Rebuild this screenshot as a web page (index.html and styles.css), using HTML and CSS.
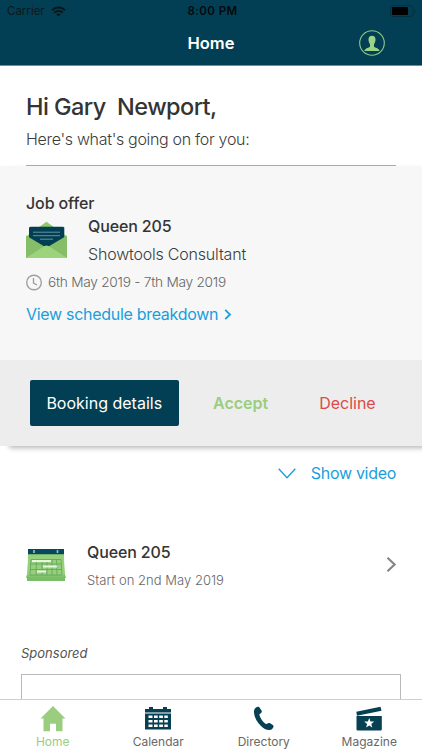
FILE: index.html
```html
<!DOCTYPE html>
<html lang="en">
<head>
<meta charset="utf-8">
<title>Home</title>
<link rel="stylesheet" href="styles.css">
</head>
<body>
<div class="app">
  <header class="header">
    <div class="status">
      <div class="carrier"><span>Carrier</span>
        <svg width="15" height="11" viewBox="0 0 15 11"><g fill="none" stroke="#0b1519" stroke-width="2"><path d="M1 4.200C4.700.6 10.300.6 14 4.200"/><path d="M3.300 6.600c2.400-2.300 6-2.300 8.400 0"/></g><path d="M7.500 10.500 5.200 8.300c1.300-1.200 3.300-1.200 4.600 0z" fill="#0b1519"/></svg>
      </div>
      <span class="time">8:00 PM</span>
      <svg class="battery" width="26" height="12" viewBox="0 0 26 12"><rect x=".5" y=".5" width="22.500" height="11" rx="2.500" fill="none" stroke="#02303f"/><rect x="2" y="2" width="16" height="8" rx="1" fill="#000"/><path d="M24.300 4c1.400.6 1.400 3.400 0 4z" fill="#02303f"/></svg>
    </div>
    <div class="navbar">
      <h1 class="nav-title">Home</h1>
      <svg class="avatar" width="26" height="26" viewBox="0 0 26 26"><circle cx="13" cy="13" r="12.300" fill="none" stroke="#8fcb83" stroke-width="1.100"/><path d="M13 5.700c2.300 0 3.600 1.500 3.500 3.800 0 2.300-.8 3.500-1.500 4.700v2.200c.3 1.400 5.200 1.300 5.500 4.600H5.500c.3-3.300 5.200-3.200 5.500-4.600v-2.200c-.7-1.200-1.500-2.400-1.500-4.700-.1-2.300 1.200-3.800 3.500-3.800z" fill="#9bd486"/></svg>
    </div>
  </header>

  <main class="content">
    <section class="greeting">
      <h2 class="hello"><span>Hi Gary  Newport,</span></h2>
      <p class="intro">Here's what's going on for you:</p>
    </section>

    <section class="offer">
      <div class="offer-body">
        <h3 class="offer-title">Job offer</h3>
        <div class="offer-main">
          <svg class="envelope" width="42" height="38" viewBox="0 0 42 38"><path d="M0 15.500 20.500.8 41 15.500V37H0z" fill="#8fc76d"/><path d="M3 6.500 4.500 5.700H37l1.300.8V18L20.500 28 3 18z" fill="#023f52"/><path d="M0 14.500 18.500 25.500 0 37z" fill="#86bd69"/><path d="M41 14.500 22.500 25.500 41 37z" fill="#86bd69"/><path d="M0 37 18.500 25q2-1.200 4 0L41 37z" fill="#9dd47b"/><path d="M7 11.200h27M7 14.700h27M14 18.200h13" stroke="#719baa" stroke-width=".9"/></svg>
          <div>
            <h4 class="job">Queen 205</h4>
            <p class="role">Showtools Consultant</p>
          </div>
        </div>
        <div class="dates">
          <svg width="17" height="17" viewBox="0 0 17 17" fill="none" stroke="#a0a0a0" stroke-width="1.400"><circle cx="8" cy="8.500" r="7.300"/><path d="M7.500 4v5l3.600 2"/></svg>
          <span>6th May 2019 - 7th May 2019</span>
        </div>
        <a class="breakdown"><span>View schedule breakdown</span>
          <svg width="8" height="11" viewBox="0 0 8 11"><path d="M1.200.8 6 5.500 1.200 10.200" fill="none" stroke="#1a9edb" stroke-width="1.800"/></svg>
        </a>
      </div>
      <div class="actions">
        <button class="btn-details">Booking details</button>
        <span class="accept">Accept</span>
        <span class="decline">Decline</span>
      </div>
    </section>

    <div class="video">
      <svg width="18" height="11" viewBox="0 0 18 11"><path d="M.7.8 9 9.700 17.300.8" fill="none" stroke="#1a9edb" stroke-width="1.300"/></svg>
      <span>Show video</span>
    </div>

    <section class="booking">
      <svg class="cal" width="40" height="33" viewBox="0 0 40 33"><path d="M2 5h36l.3 17L40 29H0l1.700-7z" fill="#82c36d"/><path d="M2 5h36v9l1 12H1l1-12z" fill="#96d07b"/><path d="M1 28h38v4H1z" fill="#79bd68"/><path d="M2 0h36v5.300H2z" fill="#07495b"/><path d="M8 1v3M31.500 1v3" stroke="#9cc3ba" stroke-width="1.600"/><path d="M5 10.500h30l1 15.500H4zM4.800 15h30.500M4.400 20.500h31.200M10.500 10.500 10 26M16 10.500V26M21 10.500V26M26 10.500V26M30.500 10.500 31 26" fill="none" stroke="#5fa35e" stroke-width=".8"/><path d="M6 12h19M17 17.500h14M11 22.500h9" stroke="#e8f6df" stroke-width="2"/></svg>
      <div class="booking-text">
        <h3 class="booking-title">Queen 205</h3>
        <p class="booking-date">Start on 2nd May 2019</p>
      </div>
      <svg class="chev" width="11" height="17" viewBox="0 0 11 17"><path d="M1.500 1.700 8.600 8.500 1.500 15.300" fill="none" stroke="#858585" stroke-width="2.200"/></svg>
    </section>

    <section class="sponsor">
      <p class="sponsor-label">Sponsored</p>
      <div class="sponsor-box"></div>
    </section>
  </main>

  <nav class="tabs">
    <div class="tab active"><svg width="26" height="26" viewBox="0 0 26 26"><path d="M13 0 25.500 12.500H22.500V25.300H16v-7.500h-6v7.500H3.500V12.500H.5z" fill="#9acd7e"/></svg><span>Home</span></div>
    <div class="tab"><svg width="26" height="26" viewBox="0 0 26 26"><path d="M4 1h4v2h10V1h4v2h4v3.500H0V3h4zM0 7.500h26V23.500H0zM3.500 9.500v2.600h4V9.500zm5.500 0v2.600h3.700V9.500zm5.200 0v2.600h3.700V9.500zm5.100 0v2.600h3.500V9.500zM3.500 13.900v2.600h4v-2.600zm5.500 0v2.600h3.700v-2.600zm5.200 0v2.600h3.700v-2.600zm5.100 0v2.600h3.500v-2.600zM3.500 18.500v2.600h4v-2.600zm5.500 0v2.600h3.700v-2.600zm5.200 0v2.600h3.700v-2.600zm5.100 0v2.600h3.500v-2.600z" fill="#073f53" fill-rule="evenodd"/></svg><span>Calendar</span></div>
    <div class="tab"><svg width="26" height="26" viewBox="0 0 26 26"><path d="M5 1.500C6.500.5 8.200.6 8.800 2l1.900 2.800c.5 1.400-.5 2.100-2 3.200-.3.300-.4.800-.2 1.300.8 3.200 3 6.300 6 8.400.4.300 1 .4 1.400.1 1.200-.8 2.400-1.300 3.600-.4l2.600 1.800c1.200 1-.3 4-2.200 4.600-3.500 1-7-.8-9.600-3.600C6.200 16.700 3.500 12 3 6.800 2.800 4.500 3.500 2.500 5 1.500z" fill="#073f53"/></svg><span>Directory</span></div>
    <div class="tab"><svg width="26" height="26" viewBox="0 0 26 26"><path d="M.3 5.800 24.500.7l1 4L1 9.800z" fill="#073f53"/><path d="M.5 10h25.300v13.300a1.200 1.200 0 0 1-1.200 1.200H1.700a1.200 1.200 0 0 1-1.200-1.200z" fill="#073f53"/><path d="m13.200 12 1.300 3.500 3.700.1-2.900 2.300 1 3.600-3.100-2.100-3.100 2.100 1-3.600-2.900-2.300 3.700-.1z" fill="#fff"/></svg><span>Magazine</span></div>
  </nav>
</div>
</body>
</html>
```
FILE: styles.css
```css
* { box-sizing: border-box; margin: 0; padding: 0; }
body { font-family: Inter, "Liberation Sans", sans-serif; background: #fff; color: #343434; }
span { white-space: pre; }
svg { display: block; flex: none; }
.app { width: 422px; height: 750px; display: flex; flex-direction: column; overflow: hidden; }

.header { flex: none; height: 66px; background: #023f54; border-bottom: 1px solid #6592a1; }
.status { height: 22px; display: grid; grid-template-columns: 1fr auto 1fr; align-items: center; padding: 0 6px 0 9px; }
.carrier { display: flex; align-items: center; gap: 6px; margin-left: -2px; font-size: 11.5px; color: #10171a; }
.time { font-size: 11.5px; font-weight: 600; letter-spacing: .4px; color: #050a0c; }
.battery { justify-self: end; }
.navbar { height: 42px; display: grid; grid-template-columns: 1fr auto 1fr; align-items: center; padding: 0 37px; }
.nav-title { grid-column: 2; font-size: 16.5px; font-weight: 600; line-height: 20px; color: #fff; }
.avatar { justify-self: end; }

.content { flex: 1; min-height: 0; overflow: hidden; }
.greeting { height: 100px; margin: 0 26px; padding-top: 25px; border-bottom: 1px solid #aaa; }
.hello { font-size: 23.5px; font-weight: 450; line-height: 32px; letter-spacing: -.56px; }
.intro { font-size: 16px; font-weight: 300; line-height: 20px; margin-top: 6px; letter-spacing: -.32px; color: #3c3c3c; }

.offer { box-shadow: 8px 3px 5px -1px #b8b8b8; }
.offer-body { height: 194px; padding: 27px 26px 0; background: #f7f7f7; }
.offer-title { font-size: 16px; font-weight: 450; line-height: 20px; letter-spacing: -.12px; }
.offer-main { display: flex; gap: 20px; padding-top: 2px; }
.envelope { margin-top: 6px; }
.job, .booking-title { font-size: 16px; font-weight: 500; line-height: 22px; letter-spacing: -.13px; }
.role { font-size: 16px; font-weight: 300; line-height: 22px; margin-top: 6px; letter-spacing: -.2px; color: #3c3c3c; }
.dates { display: flex; align-items: center; gap: 5px; height: 18px; margin-top: 8px; font-size: 13.7px; font-weight: 300; letter-spacing: -.26px; color: #666; }
.breakdown { display: flex; align-items: center; gap: 6px; height: 24px; margin-top: 11px; font-size: 16px; letter-spacing: -.3px; color: #1a9edb; }
.actions { height: 86px; padding-left: 29.5px; display: flex; align-items: center; background: #ededed; font-size: 16px; }
.btn-details { width: 149.5px; height: 46px; border: 0; border-radius: 2px; background: #023f54; color: #fff; font: inherit; }
.accept { margin-left: 34px; font-weight: 600; color: #9acd7e; }
.decline { margin-left: 51px; color: #dc4a4a; }

.video { height: 24px; margin-top: 15px; padding-right: 26px; display: flex; align-items: center; justify-content: flex-end; gap: 15px; font-size: 16px; letter-spacing: -.3px; color: #1a9edb; }
.booking { display: flex; margin-top: 56px; padding: 0 25px 0 26px; height: 48px; }
.cal { margin-top: 8px; }
.booking-text { flex: 1; margin-left: 21px; }
.booking-date { font-size: 13px; font-weight: 300; line-height: 18px; margin-top: 8px; letter-spacing: .03px; color: #666; }
.chev { margin-top: 15px; }
.sponsor { margin: 55px 21px 0; }
.sponsor-label { font-size: 13px; font-style: italic; line-height: 18px; color: #555; }
.sponsor-box { height: 150px; margin-top: 12px; border: 1px solid #b8bbbb; }

.tabs { flex: none; height: 51px; display: grid; grid-template-columns: repeat(4, 1fr); border-top: 1px solid #ccd0d1; background: #fff; }
.tab { display: flex; flex-direction: column; align-items: center; padding-top: 6px; font-size: 12px; line-height: 16px; color: #686868; }
.tab svg { margin-bottom: 1.5px; }
.active { color: #9acd7e; }
```
